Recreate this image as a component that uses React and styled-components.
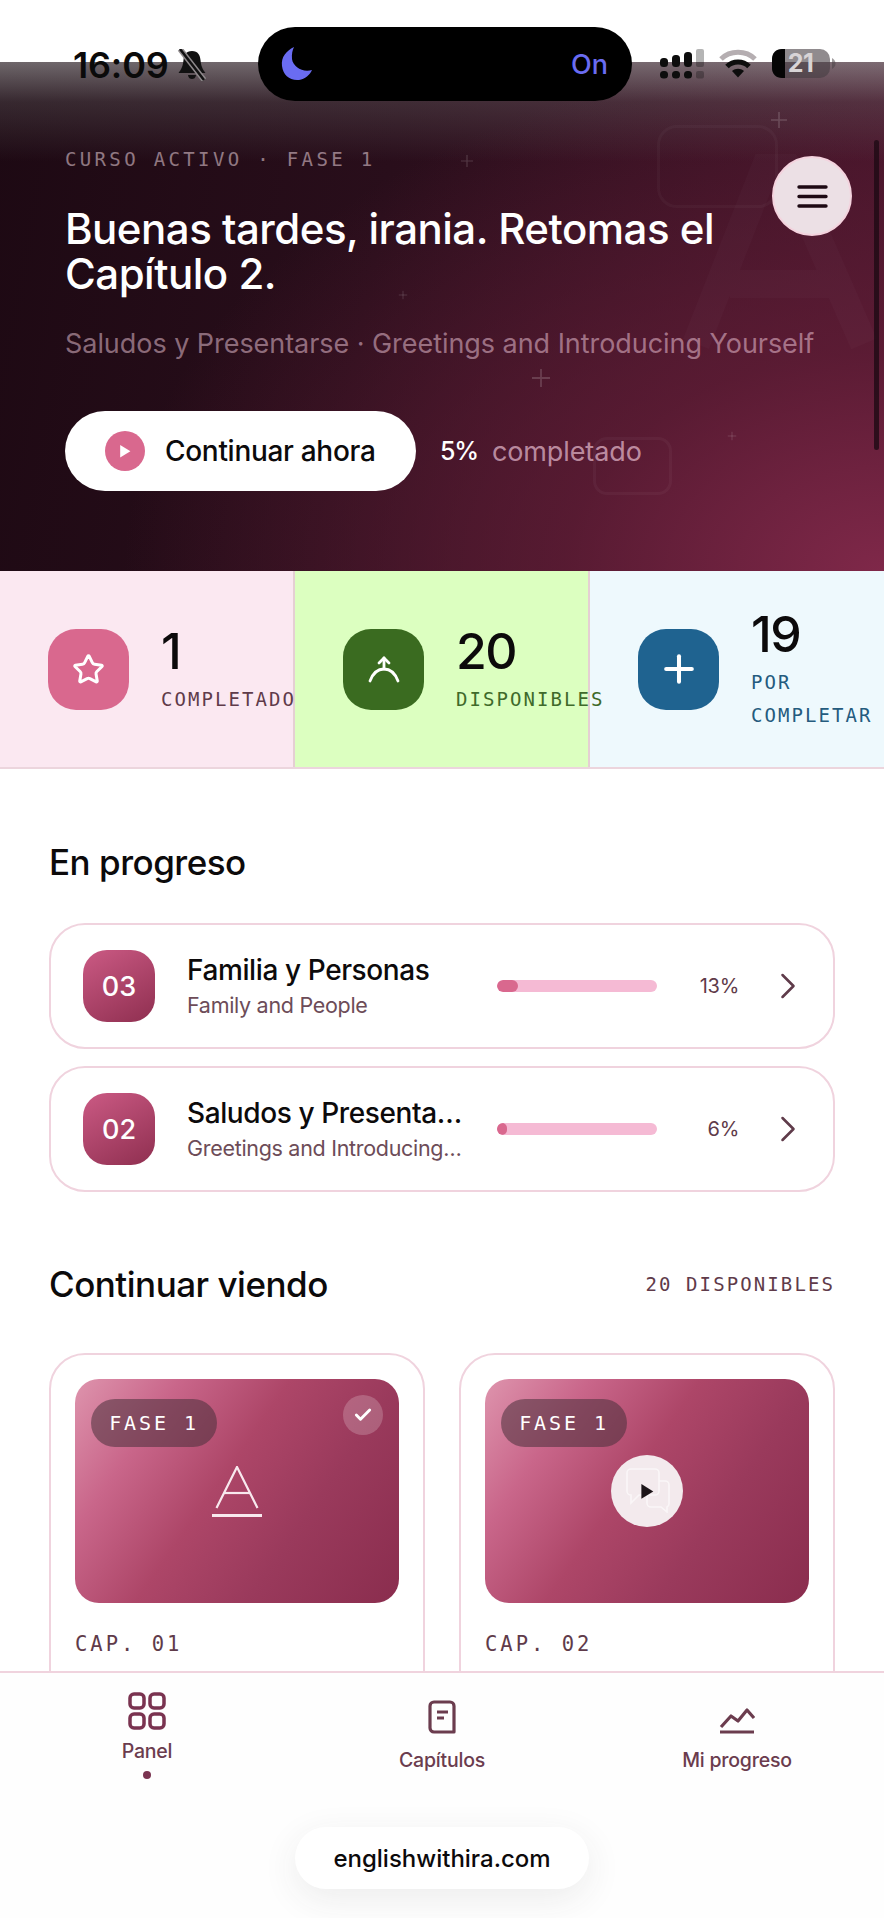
import React from "react";
import styled, { createGlobalStyle } from "styled-components";
import { Star, Plus, ChevronRight, Check } from "lucide-react";

const sans = `"Inter", "Liberation Sans", sans-serif`;
const mono = `"DejaVu Sans Mono", "Liberation Mono", monospace`;

const GlobalStyle = createGlobalStyle`
  html, body { margin: 0; padding: 0; background: #fff; }
  * { box-sizing: border-box; }
  body { font-family: ${sans}; color: #0c0a0b; }
`;

const Page = styled.div`
  position: relative;
  width: 884px;
  height: 1918px;
  overflow: hidden;
  display: flex;
  flex-direction: column;
  background: #fff;
`;

const Scroller = styled.main`
  height: 1671px;
  padding-top: 62px;
  overflow: hidden;
  flex: none;
`;

/* status bar lies over the hero */
const StatusBar = styled.div`
  position: absolute;
  top: 0;
  left: 0;
  width: 884px;
  height: 100px;
  z-index: 5;
`;
const Time = styled.span`
  position: absolute;
  left: 73px;
  top: 44px;
  font-size: 36px;
  line-height: 42px;
  font-weight: 600;
  letter-spacing: -0.2px;
  color: #0a0a0a;
`;
const Island = styled.div`
  position: absolute;
  left: 258px;
  top: 27px;
  width: 374px;
  height: 74px;
  border-radius: 37px;
  background: #000;
  display: flex;
  align-items: center;
  justify-content: space-between;
  padding: 0 24px 0 21px;
`;
const IslandOn = styled.span`
  font-size: 27px;
  font-weight: 500;
  color: #6a6cf2;
`;
const StatusIcon = styled.svg`
  position: absolute;
  left: ${(p) => p.$x}px;
  top: ${(p) => p.$y}px;
`;
const BatteryText = styled.span`
  position: absolute;
  left: 785px;
  top: 46px;
  width: 31px;
  text-align: center;
  font-size: 25px;
  line-height: 34px;
  font-weight: 700;
  letter-spacing: -0.5px;
  color: #d8d4d6;
`;

const Hero = styled.section`
  position: relative;
  height: 509px;
  padding: 82px 65px 0;
  overflow: hidden;
  background:
    linear-gradient(180deg, rgba(160, 160, 160, 0.62) 0%, rgba(120, 120, 120, 0.28) 40px, rgba(60, 60, 60, 0) 100px),
    radial-gradient(ellipse 760px 520px at 100% 100%, #7f2849 0%, rgba(100, 30, 56, 0.72) 42%, rgba(70, 20, 40, 0) 100%),
    linear-gradient(100deg, #1d0913 0%, #290e1b 42%, #47152b 100%);
`;
const Eyebrow = styled.div`
  font-family: ${mono};
  font-size: 19px;
  line-height: 30px;
  letter-spacing: 3.35px;
  color: rgba(255, 228, 238, 0.5);
`;
const Headline = styled.h1`
  position: relative;
  margin: 32px 0 0;
  width: 700px;
  font-size: 42px;
  line-height: 45px;
  font-weight: 500;
  letter-spacing: -0.5px;
  color: #fff;
`;
const Subtitle = styled.p`
  position: relative;
  margin: 30px 0 0;
  font-size: 27px;
  line-height: 36px;
  letter-spacing: -0.05px;
  white-space: nowrap;
  color: rgba(255, 215, 232, 0.48);
`;
const CtaRow = styled.div`
  position: relative;
  margin-top: 49px;
  display: flex;
  align-items: center;
  gap: 24px;
`;
const CtaButton = styled.button`
  width: 351px;
  height: 80px;
  border: 0;
  border-radius: 40px;
  background: #fff;
  display: flex;
  align-items: center;
  gap: 20px;
  padding: 0 0 0 40px;
  font-family: ${sans};
  font-size: 28px;
  font-weight: 500;
  letter-spacing: -0.3px;
  color: #0c0a0b;
`;
const PlayDot = styled.span`
  width: 40px;
  height: 40px;
  border-radius: 50%;
  background: #d9688e;
  display: flex;
  align-items: center;
  justify-content: center;
`;
const Percent = styled.span`
  font-size: 25px;
  font-weight: 500;
  letter-spacing: -1.2px;
  color: #fff;
  margin-right: -10px;
`;
const PercentLabel = styled.span`
  font-size: 27px;
  letter-spacing: -0.1px;
  color: rgba(255, 215, 232, 0.62);
`;
const MenuButton = styled.button`
  position: absolute;
  right: 32px;
  top: 94px;
  width: 80px;
  height: 80px;
  border-radius: 50%;
  border: 2px solid #f4d3de;
  background: #ece0e5;
  display: flex;
  align-items: center;
  justify-content: center;
  padding: 0;
  z-index: 2;
`;
const ScrollThumb = styled.div`
  position: absolute;
  right: 5px;
  top: 78px;
  width: 5px;
  height: 310px;
  border-radius: 3px;
  background: rgba(30, 10, 20, 0.8);
`;
const Sparkle = styled.svg`
  position: absolute;
  left: ${(p) => p.$x}px;
  top: ${(p) => p.$y}px;
  transform: translate(-50%, -50%);
`;
const GhostSquare = styled.div`
  position: absolute;
  left: 657px;
  top: 63px;
  width: 121px;
  height: 83px;
  border-radius: 20px;
  border: 3px solid rgba(255, 255, 255, 0.03);
`;
const GhostBubble = styled.div`
  position: absolute;
  left: 593px;
  top: 375px;
  width: 79px;
  height: 58px;
  border-radius: 14px;
  border: 3px solid rgba(255, 255, 255, 0.04);
`;
const GhostLetter = styled.svg`
  position: absolute;
  left: 680px;
  top: 92px;
`;

const Stats = styled.section`
  display: grid;
  grid-template-columns: 295px 295px 294px;
  height: 198px;
  border-bottom: 2px solid #ecd5dd;
`;
const Stat = styled.div`
  display: flex;
  align-items: center;
  gap: 32px;
  padding-left: ${(p) => p.$pad}px;
  background: ${(p) => p.$bg};
  border-right: ${(p) => (p.$last ? "0" : "2px solid #e5cfd3")};
  min-width: 0;
`;
const StatTile = styled.div`
  flex: none;
  width: 81px;
  height: 81px;
  border-radius: 28px;
  background: ${(p) => p.$bg};
  display: flex;
  align-items: center;
  justify-content: center;
  color: #fff;
`;
const StatBody = styled.div`
  position: relative;
  z-index: 1;
  width: 130px;
`;
const StatValue = styled.div`
  font-size: 50px;
  line-height: 56px;
  font-weight: 500;
  letter-spacing: -1.5px;
  color: #0c0a0b;
`;
const StatLabel = styled.div`
  margin-top: 4px;
  font-family: ${mono};
  font-size: 19px;
  line-height: 33px;
  letter-spacing: 2.05px;
  color: ${(p) => p.$c};
`;

const Content = styled.div`
  padding: 70px 49px 0;
  background: #fff;
`;
const SectionHead = styled.div`
  display: flex;
  align-items: center;
  justify-content: space-between;
  height: 46px;
`;
const SectionTitle = styled.h2`
  margin: 0;
  font-size: 35px;
  line-height: 46px;
  font-weight: 500;
  letter-spacing: -0.5px;
`;
const SectionMeta = styled.span`
  font-family: ${mono};
  font-size: 19px;
  letter-spacing: 2.1px;
  color: #5f3b4a;
`;
const ProgressList = styled.div`
  margin-top: 38px;
  display: flex;
  flex-direction: column;
  gap: 17px;
  margin-bottom: 69px;
`;
const ProgressCard = styled.div`
  height: 126px;
  border: 2px solid #f0d3de;
  border-radius: 36px;
  display: flex;
  align-items: center;
  padding: 0 23px 0 32px;
`;
const NumBadge = styled.div`
  flex: none;
  width: 72px;
  height: 72px;
  border-radius: 24px;
  background: linear-gradient(150deg, #cb5a84 0%, #8f2f50 100%);
  color: #fff;
  font-size: 27px;
  font-weight: 500;
  display: flex;
  align-items: center;
  justify-content: center;
`;
const ProgressText = styled.div`
  flex: none;
  width: 280px;
  margin-left: 32px;
  min-width: 0;
`;
const ProgressTitle = styled.div`
  font-size: 28px;
  line-height: 36px;
  font-weight: 500;
  letter-spacing: -0.4px;
  white-space: nowrap;
  overflow: hidden;
  text-overflow: ellipsis;
`;
const ProgressSub = styled.div`
  margin-top: 2px;
  font-size: 21.5px;
  line-height: 30px;
  letter-spacing: -0.3px;
  color: #6d4c58;
  white-space: nowrap;
  overflow: hidden;
  text-overflow: ellipsis;
`;
const Bar = styled.div`
  flex: none;
  margin-left: 30px;
  width: 160px;
  height: 12px;
  border-radius: 6px;
  background: #f5bad4;
  overflow: hidden;
`;
const BarFill = styled.div`
  height: 100%;
  border-radius: 6px;
  background: #d9688e;
`;
const Pct = styled.span`
  flex: 1;
  text-align: right;
  font-size: 20px;
  letter-spacing: -0.3px;
  color: #5f3b4a;
`;
const Chevron = styled(ChevronRight)`
  flex: none;
  margin-left: 27px;
  color: #5f3b4a;
`;
const VideoGrid = styled.div`
  margin-top: 46px;
  display: grid;
  grid-template-columns: 376px 376px;
  gap: 34px;
`;
const VideoCard = styled.div`
  height: 420px;
  border: 2px solid #f0d3de;
  border-radius: 36px;
  padding: 24px;
`;
const Thumb = styled.div`
  position: relative;
  height: 224px;
  border-radius: 24px;
  background: linear-gradient(125deg, #de94ad 0%, #c9668a 22%, #ad4668 45%, #9a3a5c 68%, #8a2d4e 100%);
  display: flex;
  align-items: center;
  justify-content: center;
`;
const PhaseTag = styled.span`
  position: absolute;
  left: 16px;
  top: 20px;
  width: 126px;
  height: 48px;
  border-radius: 24px;
  background: rgba(72, 48, 58, 0.55);
  color: #fff;
  font-family: ${mono};
  font-size: 20px;
  letter-spacing: 2.9px;
  display: flex;
  align-items: center;
  justify-content: center;
`;
const DoneMark = styled.span`
  position: absolute;
  right: 16px;
  top: 16px;
  width: 40px;
  height: 40px;
  border-radius: 50%;
  background: rgba(255, 255, 255, 0.2);
  color: #fff;
  display: flex;
  align-items: center;
  justify-content: center;
`;
const PlayRound = styled.span`
  position: relative;
  width: 72px;
  height: 72px;
  border-radius: 50%;
  background: #f3eaed;
  display: flex;
  align-items: center;
  justify-content: center;
`;
const GhostChat = styled.svg`
  position: absolute;
  left: 14px;
  top: 12px;
  opacity: 0.6;
`;
const CapLabel = styled.div`
  margin-top: 27px;
  font-family: ${mono};
  font-size: 20.5px;
  line-height: 28px;
  letter-spacing: 3px;
  color: #5f3b4a;
`;

const BottomNav = styled.nav`
  flex: 1;
  position: relative;
  border-top: 2px solid #f0d3de;
  background: #fefefe;
  display: flex;
  flex-direction: column;
  z-index: 3;
`;
const NavRow = styled.div`
  display: grid;
  grid-template-columns: 294px 296px 294px;
  height: 125px;
`;
const NavItem = styled.div`
  display: flex;
  flex-direction: column;
  align-items: center;
  justify-content: center;
  color: #7a3350;
`;
const NavLabel = styled.span`
  margin-top: ${(p) => p.$mt}px;
  font-size: 19.5px;
  line-height: 24px;
  font-weight: 500;
  letter-spacing: -0.2px;
  color: #6b3c4e;
`;
const NavDot = styled.span`
  margin-top: 8px;
  width: 8px;
  height: 8px;
  border-radius: 50%;
  background: #7a3350;
`;
const UrlPill = styled.div`
  margin: 29px auto 0;
  width: 294px;
  height: 62px;
  border-radius: 31px;
  background: #fff;
  box-shadow: 0 10px 36px rgba(60, 50, 55, 0.09);
  display: flex;
  align-items: center;
  justify-content: center;
  font-size: 24px;
  font-weight: 500;
  color: #0c0a0b;
`;
const PlaySvg = styled.svg`
  position: relative;
`;

const PlayGlyph = ({ size = 12, color = "#fff" }) => (
  <PlaySvg width={size} height={size * 1.2} viewBox="0 0 10 12">
    <path d="M1 0.8 L9.5 6 L1 11.2 Z" fill={color} />
  </PlaySvg>
);

const SparkleMark = ({ x, y, size }) => (
  <Sparkle $x={x} $y={y} width={size} height={size} viewBox="0 0 20 20">
    <path d="M10 0V20M0 10H20" stroke="rgba(255,255,255,0.17)" strokeWidth="2" />
  </Sparkle>
);

const chapters = [
  { num: "03", title: "Familia y Personas", sub: "Family and People", pct: 13 },
  { num: "02", title: "Saludos y Presentarse", sub: "Greetings and Introducing Yourself", pct: 6 },
];

const App = () => {
  return (
    <Page>
      <GlobalStyle />

      <StatusBar>
        <Time>16:09</Time>
        {/* muted bell */}
        <StatusIcon $x={177} $y={49} width="30" height="32" viewBox="0 0 30 32">
          <path d="M15 2c-6 0-8 4-8.500 9-.5 6-2 9-5 13h27c-3-4-4.500-7-5-13-.5-5-2.500-9-8.500-9z" fill="#111" />
          <path d="M11 26c.5 3 2 4 4 4s3.500-1 4-4z" fill="#111" />
          <path d="M3 0 L27 31" stroke="#8f8a8c" strokeWidth="5.500" />
          <path d="M3 0 L27 31" stroke="#111" strokeWidth="2.500" />
        </StatusIcon>
        <Island>
          <svg width="36" height="36" viewBox="0 0 36 36">
            <path d="M15 1C7 5 2 11 3 20c1 9 8 15 17 14 6-1 11-5 13-10-9 3-19-3-20-11-.5-5 .5-9 2-12z" fill="#6a6cf2" />
          </svg>
          <IslandOn>On</IslandOn>
        </Island>
        {/* signal */}
        <StatusIcon $x={660} $y={48} width="44" height="31" viewBox="0 0 44 31">
          <g fill="#0d0d0d">
            <rect x="0" y="10" width="8" height="9" rx="3.500" />
            <rect x="0" y="23" width="8" height="7.500" rx="3.500" />
            <rect x="12" y="7" width="8" height="12" rx="3.500" />
            <rect x="12" y="23" width="8" height="7.500" rx="3.500" />
            <rect x="24" y="4" width="8" height="15" rx="3.500" />
            <rect x="24" y="23" width="8" height="7.500" rx="3.500" />
          </g>
          <g fill="#0d0d0d" opacity="0.3">
            <rect x="36" y="1" width="8" height="18" rx="2" />
            <rect x="36" y="23" width="8" height="7.500" rx="2" />
          </g>
        </StatusIcon>
        {/* wifi */}
        <StatusIcon $x={719} $y={49} width="38" height="29" viewBox="0 0 38 29">
          <path d="M2 10C11 1 27 1 36 10" fill="none" stroke="#b5aeb1" strokeWidth="5" />
          <path d="M8 17.500C14 11.500 24 11.500 30 17.500" fill="none" stroke="#0d0d0d" strokeWidth="5" />
          <path d="M13 22c3.500-3 8.500-3 12 0l-6 6.500z" fill="#0d0d0d" />
        </StatusIcon>
        {/* battery */}
        <StatusIcon $x={772} $y={48} width="64" height="31" viewBox="0 0 64 31">
          <rect x="0" y="1" width="58" height="29" rx="10" fill="rgba(70,62,66,0.6)" />
          <path d="M13 1v29h-3C4 30 0 26 0 20V11C0 5 4 1 10 1z" fill="#050505" />
          <path d="M60 10c2 1 3.500 3 3.500 5.500S62 20 60 21z" fill="rgba(70,62,66,0.5)" />
        </StatusIcon>
        <BatteryText>21</BatteryText>
      </StatusBar>

      <Scroller>
        <Hero>
          <SparkleMark x={779} y={58} size={16} />
          <SparkleMark x={467} y={99} size={12} />
          <SparkleMark x={403} y={233} size={9} />
          <SparkleMark x={541} y={316} size={18} />
          <SparkleMark x={732} y={374} size={9} />
          <GhostSquare />
          <GhostBubble />
          <GhostLetter width="200" height="200" viewBox="0 0 200 200">
            <path d="M16 190 L85 14 H107 L184 190 M50 130 H150" fill="none" stroke="rgba(255,255,255,0.02)" strokeWidth="28" />
          </GhostLetter>
          <ScrollThumb />

          <Eyebrow>CURSO ACTIVO · FASE 1</Eyebrow>
          <Headline>Buenas tardes, irania. Retomas el Capítulo 2.</Headline>
          <Subtitle>Saludos y Presentarse · Greetings and Introducing Yourself</Subtitle>
          <CtaRow>
            <CtaButton>
              <PlayDot>
                <PlayGlyph />
              </PlayDot>
              Continuar ahora
            </CtaButton>
            <Percent>5%</Percent>
            <PercentLabel>completado</PercentLabel>
          </CtaRow>
          <MenuButton aria-label="Menú">
            <svg width="31" height="23" viewBox="0 0 31 23" fill="none" stroke="#1d0913" strokeWidth="3.400" strokeLinecap="round">
              <path d="M2 2H29M2 11.500H29M2 21H29" />
            </svg>
          </MenuButton>
        </Hero>

        <Stats>
          <Stat $bg="#fbe8f1" $pad={48}>
            <StatTile $bg="#d9688e">
              <Star size={33} strokeWidth={2.2} />
            </StatTile>
            <StatBody>
              <StatValue>1</StatValue>
              <StatLabel $c="#5f3b4a">COMPLETADO</StatLabel>
            </StatBody>
          </Stat>
          <Stat $bg="#dcffc0" $pad={48}>
            <StatTile $bg="#3a6b20">
              <svg width="32" height="27" viewBox="0 0 32 27" fill="none" stroke="#fff" strokeWidth="2.800" strokeLinecap="round" strokeLinejoin="round">
                <path d="M2 25C5 17 10 13 16 13s11 4 14 12" />
                <path d="M16 13V2" />
                <path d="M11 7l5-5 5 5" />
              </svg>
            </StatTile>
            <StatBody>
              <StatValue>20</StatValue>
              <StatLabel $c="#3f6a2a">DISPONIBLES</StatLabel>
            </StatBody>
          </Stat>
          <Stat $bg="#eef9fd" $pad={48} $last>
            <StatTile $bg="#1f6390">
              <Plus size={44} strokeWidth={2.2} />
            </StatTile>
            <StatBody>
              <StatValue>19</StatValue>
              <StatLabel $c="#245b7e">POR COMPLETAR</StatLabel>
            </StatBody>
          </Stat>
        </Stats>

        <Content>
          <SectionHead>
            <SectionTitle>En progreso</SectionTitle>
          </SectionHead>
          <ProgressList>
            {chapters.map((c) => (
              <ProgressCard key={c.num}>
                <NumBadge>{c.num}</NumBadge>
                <ProgressText>
                  <ProgressTitle>{c.title}</ProgressTitle>
                  <ProgressSub>{c.sub}</ProgressSub>
                </ProgressText>
                <Bar>
                  <BarFill style={{ width: `${c.pct}%` }} />
                </Bar>
                <Pct>{c.pct}%</Pct>
                <Chevron size={44} strokeWidth={1.4} />
              </ProgressCard>
            ))}
          </ProgressList>

          <SectionHead>
            <SectionTitle>Continuar viendo</SectionTitle>
            <SectionMeta>20 DISPONIBLES</SectionMeta>
          </SectionHead>
          <VideoGrid>
            <VideoCard>
              <Thumb>
                <PhaseTag>FASE 1</PhaseTag>
                <DoneMark>
                  <Check size={20} strokeWidth={3.5} />
                </DoneMark>
                <svg width="50" height="51" viewBox="0 0 50 51" fill="none" stroke="#f8e9ee" strokeWidth="2.500">
                  <path d="M4.500 42 L25 1 L45.500 42" strokeWidth="2.200" />
                  <path d="M12 27 H38" strokeWidth="2.200" />
                  <path d="M0 49.500 H50" strokeWidth="3" />
                </svg>
              </Thumb>
              <CapLabel>CAP. 01</CapLabel>
            </VideoCard>
            <VideoCard>
              <Thumb>
                <PhaseTag>FASE 1</PhaseTag>
                <PlayRound>
                  <GhostChat width="46" height="46" viewBox="0 0 46 46" fill="none" stroke="#ffffff" strokeWidth="1.600">
                    <path d="M2 6a4 4 0 0 1 4-4h24a4 4 0 0 1 4 4v18a4 4 0 0 1-4 4H14l-8 8v-8a4 4 0 0 1-4-4z" />
                    <path d="M22 28v8a4 4 0 0 0 4 4h10l6 5v-5a4 4 0 0 0 2-4V18a4 4 0 0 0-4-4h-6" />
                  </GhostChat>
                  <PlayGlyph size={14} color="#1c1418" />
                </PlayRound>
              </Thumb>
              <CapLabel>CAP. 02</CapLabel>
            </VideoCard>
          </VideoGrid>
        </Content>
      </Scroller>

      <BottomNav>
        <NavRow>
          <NavItem>
            <svg width="38" height="38" viewBox="0 0 38 38" fill="none" stroke="#7a3350" strokeWidth="3.500">
              <rect x="2" y="2" width="14" height="14" rx="4" />
              <rect x="22" y="2" width="14" height="14" rx="4" />
              <rect x="2" y="22" width="14" height="14" rx="4" />
              <rect x="22" y="22" width="14" height="14" rx="4" />
            </svg>
            <NavLabel $mt={9}>Panel</NavLabel>
            <NavDot />
          </NavItem>
          <NavItem>
            <svg width="28" height="34" viewBox="0 0 28 34" fill="none" stroke="#6b3c4e" strokeWidth="3.200" strokeLinejoin="round">
              <path d="M6 2H22a4 4 0 0 1 4 4V32H6a4 4 0 0 1-4-4V6a4 4 0 0 1 4-4z" />
              <path d="M9 12h11M9 18h7" />
            </svg>
            <NavLabel $mt={14}>Capítulos</NavLabel>
          </NavItem>
          <NavItem>
            <svg width="36" height="34" viewBox="0 0 36 34" fill="none" stroke="#6b3c4e" strokeWidth="3.200" strokeLinejoin="round">
              <path d="M2 27 L12 16 L19 21 L28 10 L35 18" />
              <path d="M1 32 H35" />
            </svg>
            <NavLabel $mt={14}>Mi progreso</NavLabel>
          </NavItem>
        </NavRow>
        <UrlPill>englishwithira.com</UrlPill>
      </BottomNav>
    </Page>
  );
};

export default App;
